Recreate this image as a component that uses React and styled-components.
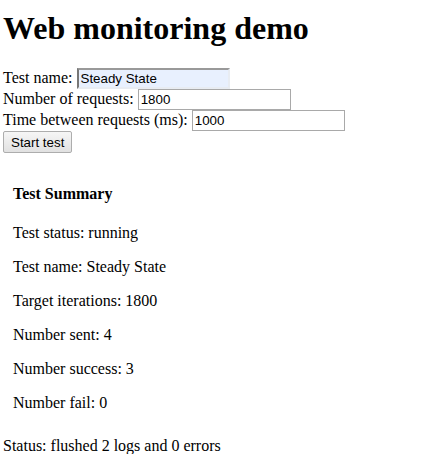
import styled, { createGlobalStyle } from "styled-components";

const GlobalStyle = createGlobalStyle`
  body {
    margin: 0;
    padding: 10px 3px 8px;
    font-family: "Liberation Serif", "Times New Roman", serif;
    font-size: 16px;
    color: #000;
    background: #fff;
  }
`;

const summary = [
  "Test status: running",
  "Test name: Steady State",
  "Target iterations: 1800",
  "Number sent: 4",
  "Number success: 3",
  "Number fail: 0",
];

export default function App() {
  return (
    <>
      <GlobalStyle />
      <Title>Web monitoring demo</Title>
      <Form onSubmit={(e) => e.preventDefault()}>
        <label>
          Test name: <TextInput $autofill defaultValue="Steady State" />
        </label>
        <br />
        <label>
          Number of requests: <TextInput defaultValue="1800" />
        </label>
        <br />
        <label>
          Time between requests (ms): <TextInput defaultValue="1000" />
        </label>
        <br />
        <StartButton type="submit">Start test</StartButton>
      </Form>
      <Summary>
        <SummaryTitle>Test Summary</SummaryTitle>
        {summary.map((line) => (
          <SummaryLine key={line}>{line}</SummaryLine>
        ))}
      </Summary>
      <StatusLine>Status: flushed 2 logs and 0 errors</StatusLine>
    </>
  );
}

const Title = styled.h1`
  font-size: 32px;
  font-weight: bold;
  margin: 0 0 21.44px;
`;

const Form = styled.form`
  margin: 0;
`;

const TextInput = styled.input`
  box-sizing: border-box;
  width: 153px;
  height: 21px;
  padding: 1px 2px;
  font-family: "Liberation Sans", Arial, sans-serif;
  font-size: 13.33px;
  color: #000;
  outline: none;
  border-radius: 0;
  background: ${({ $autofill }) => ($autofill ? "#e8f0fe" : "#fff")};
  border: ${({ $autofill }) => ($autofill ? "2px solid" : "1px solid #a9a9a9")};
  border-color: ${({ $autofill }) =>
    $autofill ? "#999 #e8ecf2 #e8ecf2 #777" : "#a9a9a9"};
`;

const StartButton = styled.button`
  box-sizing: border-box;
  height: 22px;
  padding: 1px 7px;
  font-family: "Liberation Sans", Arial, sans-serif;
  font-size: 13.33px;
  color: #000;
  border: 1px solid #adadad;
  border-radius: 2px;
  background: linear-gradient(#f6f6f6, #e1e1e1);
`;

const Summary = styled.div`
  padding: 10px 10px 9px;
`;

const SummaryTitle = styled.h4`
  font-size: 16px;
  font-weight: bold;
  margin: 21.28px 0;
`;

const SummaryLine = styled.p`
  margin: 16px 0;
`;

const StatusLine = styled.div``;
